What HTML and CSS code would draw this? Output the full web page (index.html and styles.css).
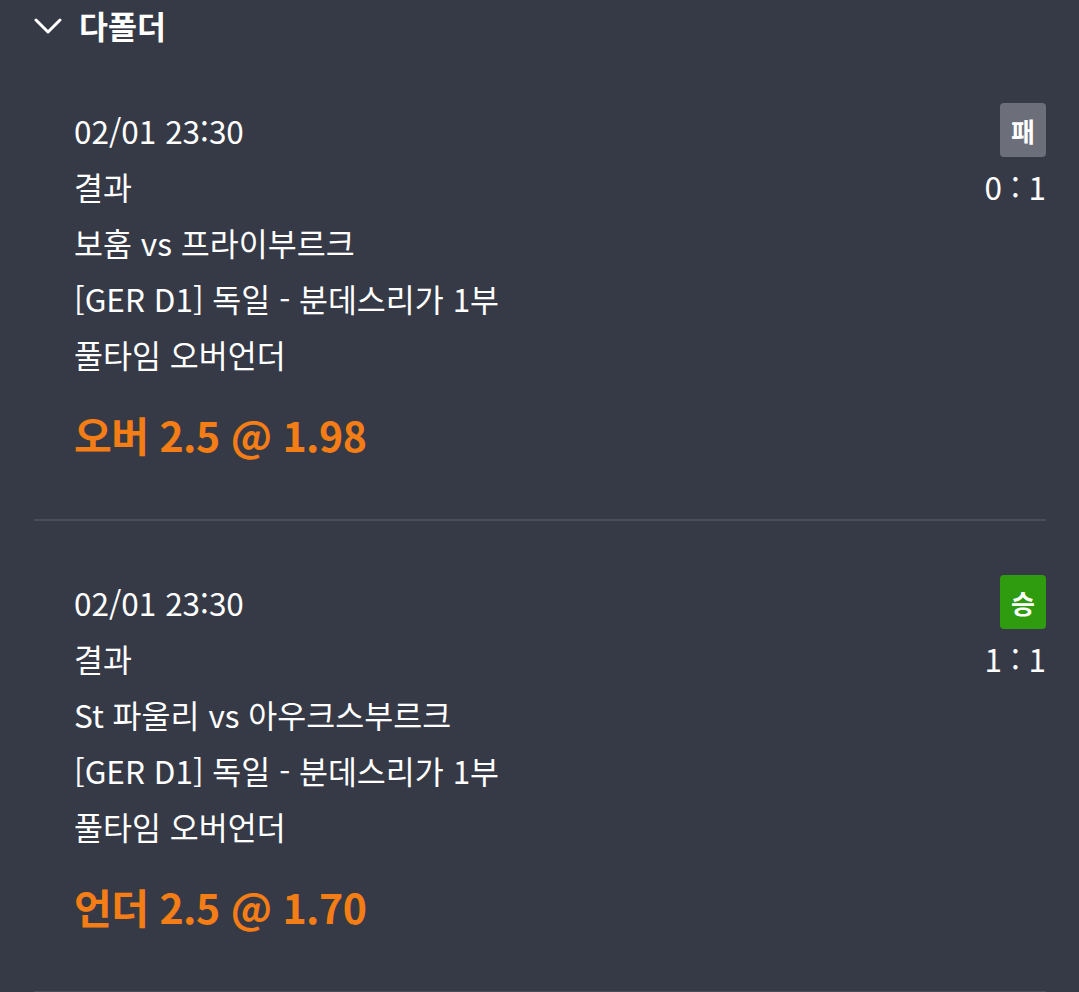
FILE: index.html
```html
<!DOCTYPE html>
<html lang="ko">
<head>
    <meta charset="UTF-8" />
    <meta name="viewport" content="width=device-width, initial-scale=1.0"/>
    <title>다폴더</title>
    <link rel="stylesheet" href="styles.css">
</head>
<body>
<div class="panel">
    <div class="panel-header">
        <svg class="chevron" width="28" height="16" viewBox="0 0 28 16">
            <path d="M2 2 L14 14 L26 2" fill="none" stroke="#fff" stroke-width="3" stroke-linecap="round" stroke-linejoin="round"/>
        </svg>
        <h2>다폴더</h2>
    </div>

    <div class="bet">
        <div class="bet-info">
            <div class="row">02/01 23:30</div>
            <div class="row">결과</div>
            <div class="row">보훔 vs 프라이부르크</div>
            <div class="row">[GER D1] 독일 - 분데스리가 1부</div>
            <div class="row">풀타임 오버언더</div>
            <div class="pick">오버 2.5 @ 1.98</div>
        </div>
        <div class="bet-result">
            <span class="badge lose">패</span>
            <div class="row">0 : 1</div>
        </div>
    </div>

    <div class="bet">
        <div class="bet-info">
            <div class="row">02/01 23:30</div>
            <div class="row">결과</div>
            <div class="row">St 파울리 vs 아우크스부르크</div>
            <div class="row">[GER D1] 독일 - 분데스리가 1부</div>
            <div class="row">풀타임 오버언더</div>
            <div class="pick">언더 2.5 @ 1.70</div>
        </div>
        <div class="bet-result">
            <span class="badge win">승</span>
            <div class="row">1 : 1</div>
        </div>
    </div>
</div>
</body>
</html>
```

FILE: styles.css
```css
body {
  margin: 0;
  background-color: #363a46;
  color: #fff;
  font-family: 'Noto Sans CJK KR', 'Noto Sans', sans-serif;
}

.panel {
  padding: 0 33px 0 34px;
}

.panel-header {
  display: flex;
  align-items: center;
  height: 46px;
  padding-top: 3px;
}

.chevron {
  display: block;
  margin-right: 17px;
}

.panel-header h2 {
  margin: 0;
  font-size: 31.5px;
  font-weight: bold;
  line-height: 1;
}

.bet {
  display: flex;
  justify-content: space-between;
  padding: 54px 0 57px 40px;
  border-bottom: 2px solid #4a4e5a;
}

.row {
  font-size: 31.5px;
  line-height: 54px;
  height: 56px;
  white-space: nowrap;
}

.pick {
  margin-top: 23px;
  font-size: 41px;
  font-weight: bold;
  line-height: 56px;
  color: #f57d15;
  letter-spacing: -0.5px;
}

.bet-result {
  display: flex;
  flex-direction: column;
  align-items: flex-end;
}

.badge {
  display: flex;
  align-items: center;
  justify-content: center;
  width: 46px;
  height: 54px;
  margin-bottom: 2px;
  border-radius: 4px;
  font-size: 26px;
  font-weight: bold;
  color: #fff;
}

.badge.lose {
  background-color: #6c6f7a;
}

.badge.win {
  background-color: #2f9c10;
}
```
